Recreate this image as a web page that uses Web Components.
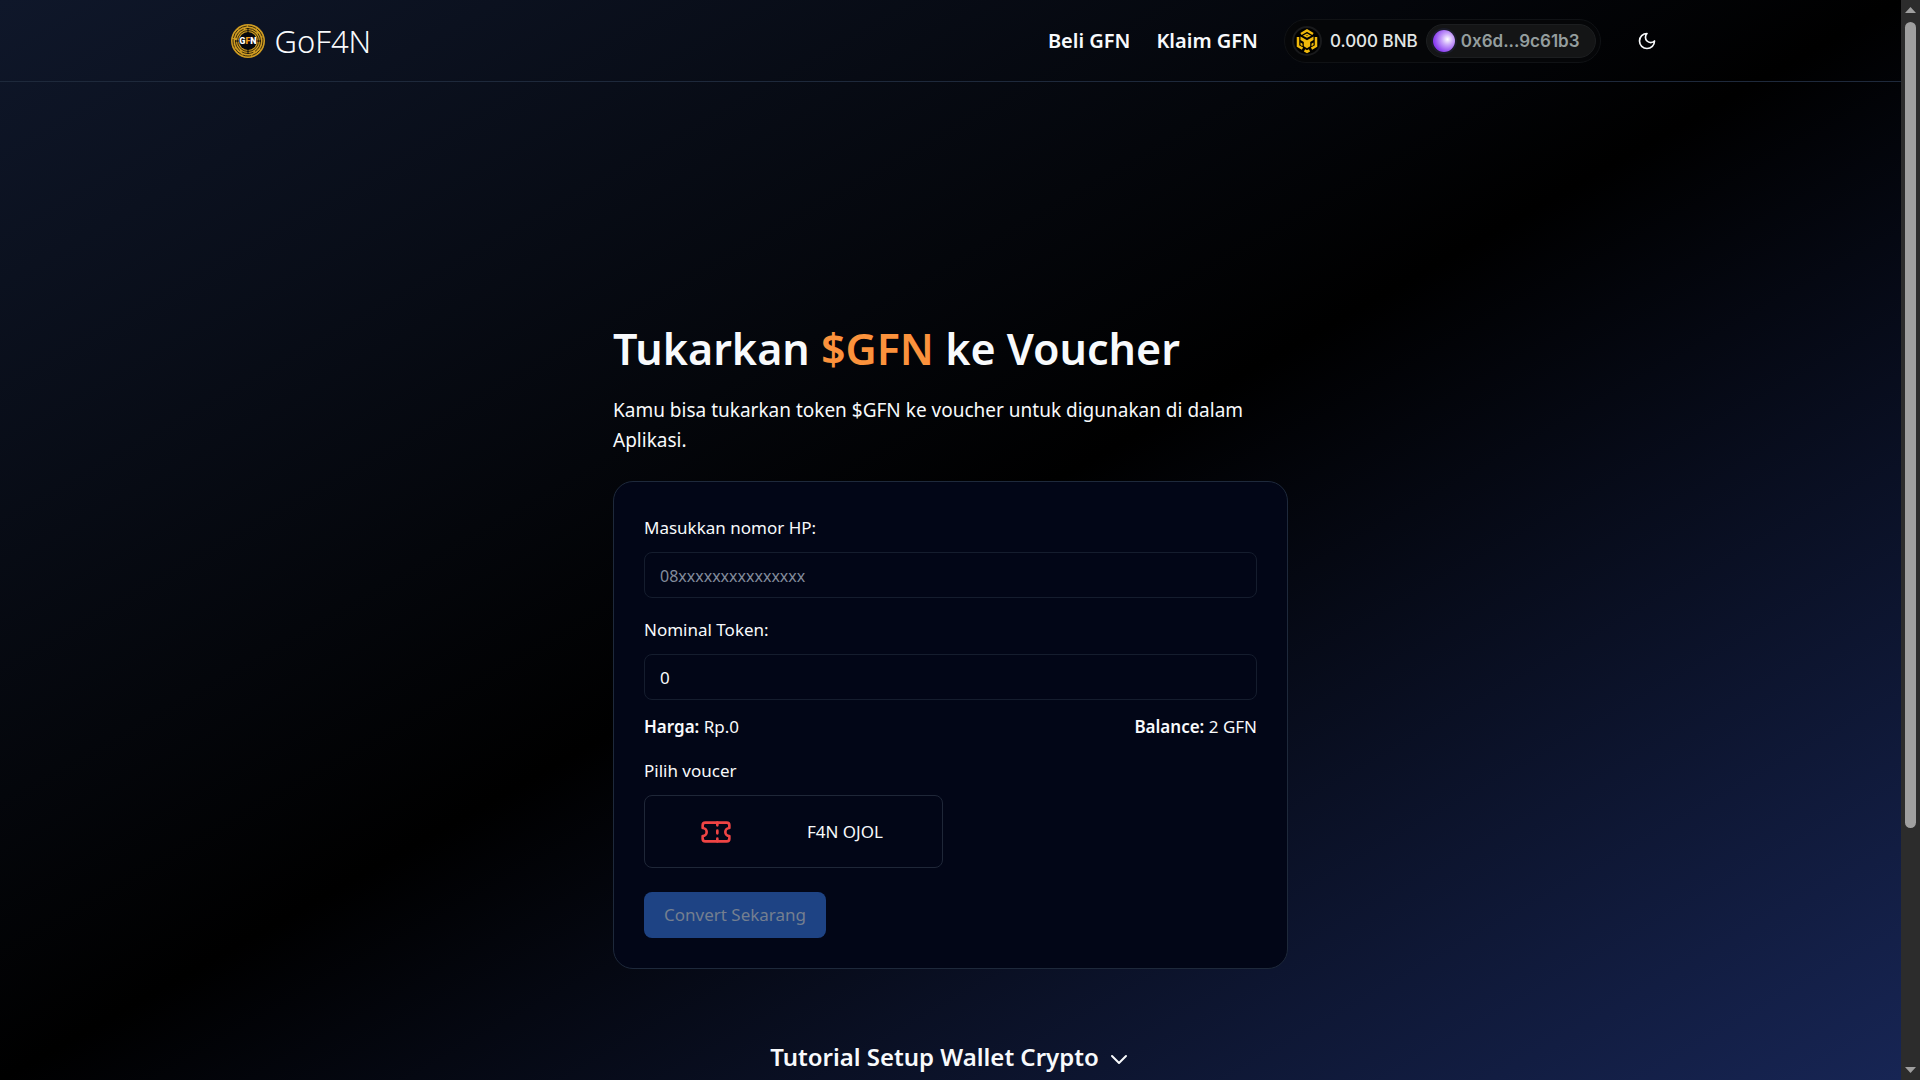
<!DOCTYPE html>
<html lang="id">
  <head>
    <meta charset="utf-8" />
    <title>GoF4N</title>
    <style>
      html,
      body {
        margin: 0;
        height: 100%;
        overflow: hidden;
      }

      body {
        font-family: "Noto Sans", sans-serif;
        font-size: 16px;
        line-height: 24px;
        color: #f8fafc;
        background: #000;
      }
    </style>
  </head>
  <body>
    <app-shell>
      <site-header slot="header">
        <nav-link href="#beli">Beli GFN</nav-link>
        <nav-link href="#klaim">Klaim GFN</nav-link>
        <wallet-pill slot="wallet" balance="0.000 BNB" address="0x6d...9c61b3"></wallet-pill>
      </site-header>
      <page-hero>
        Tukarkan <span slot="token">$GFN</span>
        <span slot="target">ke Voucher</span>
        <span slot="text">Kamu bisa tukarkan token $GFN ke voucher untuk digunakan di dalam Aplikasi.</span>
      </page-hero>
      <convert-card harga="Rp.0" balance="2 GFN">
        <text-field label="Masukkan nomor HP:" placeholder="08xxxxxxxxxxxxxxx"></text-field>
        <text-field label="Nominal Token:" value="0"></text-field>
        <voucher-option slot="voucher">F4N OJOL</voucher-option>
      </convert-card>
      <tutorial-toggle slot="footer">Tutorial Setup Wallet Crypto</tutorial-toggle>
    </app-shell>

    <script>
      class AppShell extends HTMLElement {
        constructor() {
          super();
          this.attachShadow({ mode: "open" });
          this.shadowRoot.innerHTML = `
            <style>
              :host {
                display: flex;
                height: 100vh;
              }

              .page {
                flex: 1;
                min-width: 0;
                overflow: hidden;
                background: linear-gradient(to bottom right, #0f172a, #000, #172554);
              }

              main {
                max-width: 675px;
                margin: 0 auto;
                padding-top: 237px;
              }

              footer {
                padding-top: 72px;
              }
            </style>
            <div class="page">
              <slot name="header"></slot>
              <main><slot></slot></main>
              <footer><slot name="footer"></slot></footer>
            </div>
            <scroll-rail></scroll-rail>
          `;
        }
      }

      class ScrollRail extends HTMLElement {
        constructor() {
          super();
          this.attachShadow({ mode: "open" });
          this.shadowRoot.innerHTML = `
            <style>
              :host {
                display: flex;
                flex-direction: column;
                align-items: center;
                width: 19px;
                background: #2c2c2c;
              }

              svg {
                display: block;
                fill: #9f9f9f;
              }

              .track {
                display: flex;
                flex-direction: column;
                flex: 1;
                width: 11px;
              }

              .thumb {
                flex: 7;
                border-radius: 6px;
                background: #9f9f9f;
              }

              .rest {
                flex: 2;
              }
            </style>
            <svg width="19" height="22" viewBox="0 0 19 22"><path d="M4 13l5.500-6 5.500 6z" /></svg>
            <div class="track">
              <div class="thumb"></div>
              <div class="rest"></div>
            </div>
            <svg width="19" height="22" viewBox="0 0 19 22"><path d="M4 9l5.500 6 5.500-6z" /></svg>
          `;
        }
      }

      class SiteHeader extends HTMLElement {
        constructor() {
          super();
          this.attachShadow({ mode: "open" });
          this.shadowRoot.innerHTML = `
            <style>
              :host {
                display: block;
                border-bottom: 1px solid #1e293b;
              }

              header {
                display: flex;
                align-items: center;
                max-width: 1440px;
                height: 81px;
                margin: 0 auto;
                box-sizing: border-box;
              }

              gfn-logo {
                margin-right: auto;
              }

              nav {
                display: flex;
                gap: 26px;
                margin-right: 26px;
              }

              button {
                display: flex;
                align-items: center;
                justify-content: center;
                width: 40px;
                height: 40px;
                margin: 0 4px 0 26px;
                padding: 0;
                border: 0;
                background: none;
                color: inherit;
              }
            </style>
            <header>
              <gfn-logo></gfn-logo>
              <nav><slot></slot></nav>
              <slot name="wallet"></slot>
              <button aria-label="Toggle theme">
                <svg width="20" height="20" viewBox="0 0 24 24" fill="none" stroke="currentColor" stroke-width="2" stroke-linecap="round" stroke-linejoin="round">
                  <path d="M12 3a6 6 0 0 0 9 9 9 9 0 1 1-9-9Z" />
                </svg>
              </button>
            </header>
          `;
        }
      }

      class GfnLogo extends HTMLElement {
        constructor() {
          super();
          this.attachShadow({ mode: "open" });
          this.shadowRoot.innerHTML = `
            <style>
              :host {
                display: block;
              }

              a {
                display: flex;
                align-items: center;
                gap: 10px;
                color: inherit;
                text-decoration: none;
                font-size: 31px;
                font-weight: 300;
                line-height: 36px;
              }
            </style>
            <a href="#">
              <svg width="34" height="34" viewBox="0 0 34 34" aria-hidden="true">
                <circle cx="17" cy="17" r="17" fill="#cf9c22" />
                <g fill="none" stroke="#3d2d0b">
                  <circle cx="17" cy="17" r="15" stroke-dasharray="9 1" />
                  <circle cx="17" cy="17" r="12.500" stroke-dasharray="12 2" />
                  <circle cx="17" cy="17" r="10.500" />
                </g>
                <circle cx="17" cy="17" r="9" fill="#07090f" />
                <path d="M17 4v8M17 22v8M4 17h5M25 17h5" stroke="#07090f" />
                <text x="17" y="20" text-anchor="middle" font-family="Roboto, sans-serif" font-size="9" font-weight="900" fill="#fff">G<tspan fill="#f59e1b">F</tspan>N</text>
              </svg>
              <span>GoF4N</span>
            </a>
          `;
        }
      }

      class NavLink extends HTMLElement {
        constructor() {
          super();
          this.attachShadow({ mode: "open" });
          this.shadowRoot.innerHTML = `
            <style>
              :host {
                display: block;
              }

              a {
                color: inherit;
                text-decoration: none;
                font-size: 20px;
                font-weight: 600;
                line-height: 28px;
              }
            </style>
            <a href="${this.getAttribute("href")}"><slot></slot></a>
          `;
        }
      }

      class WalletPill extends HTMLElement {
        constructor() {
          super();
          this.attachShadow({ mode: "open" });
          this.shadowRoot.innerHTML = `
            <style>
              :host {
                display: block;
              }

              button {
                display: flex;
                align-items: center;
                gap: 8px;
                height: 44px;
                box-sizing: border-box;
                padding: 0 4px 0 7px;
                border: 1px solid #101215;
                border-radius: 22px;
                background: #050608;
                color: #e4e7e7;
                font: 500 17px/20px Inter, sans-serif;
              }

              svg {
                display: block;
              }

              .address {
                display: flex;
                align-items: center;
                gap: 6px;
                height: 34px;
                box-sizing: border-box;
                padding: 0 15px 0 6px;
                border: 1px solid #1c1e20;
                border-radius: 17px;
                background: #141516;
                color: #949e9e;
                font-weight: 600;
              }

              .avatar {
                width: 22px;
                height: 22px;
                border-radius: 50%;
                box-shadow: 0 0 0 2px #1b1c2b;
                background: radial-gradient(circle at 66% 42%, #fff 0%, #c9a4fa 30%, #8b3ff0 70%, #7327e0 100%);
              }
            </style>
            <button>
              <svg width="30" height="30" viewBox="0 0 30 30" aria-hidden="true">
                <circle cx="15" cy="15" r="14" fill="#000" stroke="#191a1c" stroke-width="2" />
                <g fill="none" stroke="#f0b90b" stroke-width="2.500">
                  <path d="M9 8l6-3.500L21 8" />
                  <path d="M12.500 9.700L15 8.300l2.500 1.400L15 11z" stroke-width="1.500" />
                  <path d="M6 11v9l4.500 2.600M24 11v9l-4.500 2.600" />
                  <path d="M12.500 24.300L15 25.700l2.500-1.400" />
                </g>
                <path fill="#f0b90b" d="M8.500 10.500l6.500 3.800 6.500-3.800v3.500l-3.300 2v4.200L15 22.200l-3.200-2V16l-3.300-2z" />
                <path fill="#f0b90b" d="M8.500 16.500l2 1.200v2.600l-2-1.200zM21.500 16.500l-2 1.200v2.600l2-1.200z" />
              </svg>
              <span>${this.getAttribute("balance")}</span>
              <span class="address"><span class="avatar"></span>${this.getAttribute("address")}</span>
            </button>
          `;
        }
      }

      class PageHero extends HTMLElement {
        constructor() {
          super();
          this.attachShadow({ mode: "open" });
          this.shadowRoot.innerHTML = `
            <style>
              :host {
                display: block;
                margin-bottom: 26px;
              }

              h1 {
                margin: 0 0 16px;
                font-size: 43px;
                font-weight: 600;
                line-height: 60px;
              }

              .token {
                color: #fb923c;
              }

              p {
                margin: 0;
                font-size: 19px;
                line-height: 30px;
              }
            </style>
            <h1><slot></slot><span class="token"><slot name="token"></slot></span> <slot name="target"></slot></h1>
            <p><slot name="text"></slot></p>
          `;
        }
      }

      class ConvertCard extends HTMLElement {
        constructor() {
          super();
          this.attachShadow({ mode: "open" });
          this.shadowRoot.innerHTML = `
            <style>
              :host {
                display: block;
                padding: 34px 30px 30px;
                border: 1px solid #1e293b;
                border-radius: 20px;
                background: #020617;
                font-size: 17px;
              }

              .fields {
                display: grid;
                gap: 20px;
              }

              .info {
                display: flex;
                justify-content: space-between;
                margin: 15px 0 20px;
              }

              b {
                font-weight: 600;
              }

              .label {
                margin: 0 0 12px;
              }

              button {
                display: block;
                height: 46px;
                margin-top: 24px;
                padding: 0 20px;
                border: 0;
                border-radius: 8px;
                background: #1e4384;
                color: #747f90;
                font: inherit;
              }
            </style>
            <form>
              <div class="fields"><slot></slot></div>
              <div class="info">
                <span><b>Harga:</b> ${this.getAttribute("harga")}</span>
                <span><b>Balance:</b> ${this.getAttribute("balance")}</span>
              </div>
              <p class="label">Pilih voucer</p>
              <slot name="voucher"></slot>
              <button type="submit" disabled>Convert Sekarang</button>
            </form>
          `;
        }
      }

      class TextField extends HTMLElement {
        constructor() {
          super();
          this.attachShadow({ mode: "open" });
          this.shadowRoot.innerHTML = `
            <style>
              :host {
                display: block;
              }

              label {
                display: block;
                margin-bottom: 12px;
              }

              input {
                display: block;
                width: 100%;
                height: 46px;
                box-sizing: border-box;
                padding: 0 15px;
                border: 1px solid #151d2e;
                border-radius: 8px;
                background: none;
                color: inherit;
                font: inherit;
              }

              input::placeholder {
                color: #828c9c;
                font-size: 16px;
              }
            </style>
            <label for="field">${this.getAttribute("label")}</label>
            <input id="field" type="text" />
          `;

          this.inputElement = this.shadowRoot.querySelector("input");
          this.inputElement.placeholder = this.getAttribute("placeholder") || "";
          this.inputElement.value = this.getAttribute("value") || "";
        }
      }

      class VoucherOption extends HTMLElement {
        constructor() {
          super();
          this.attachShadow({ mode: "open" });
          this.shadowRoot.innerHTML = `
            <style>
              :host {
                display: block;
              }

              button {
                display: grid;
                grid-template-columns: 1fr 1fr;
                align-items: center;
                width: calc(50% - 8px);
                height: 73px;
                padding: 0 32px 0 6px;
                border: 1px solid #1f2738;
                border-radius: 8px;
                background: none;
                color: inherit;
                font: inherit;
              }

              svg {
                justify-self: center;
              }
            </style>
            <button type="button">
              <svg width="32" height="32" viewBox="0 0 24 24" fill="none" stroke="#ef4444" stroke-width="2" stroke-linecap="round" stroke-linejoin="round">
                <path d="M2 9a3 3 0 0 1 0 6v2a2 2 0 0 0 2 2h16a2 2 0 0 0 2-2v-2a3 3 0 0 1 0-6V7a2 2 0 0 0-2-2H4a2 2 0 0 0-2 2Z" />
                <path d="M13 5v2M13 17v2M13 11v2" />
              </svg>
              <span><slot></slot></span>
            </button>
          `;
        }
      }

      class TutorialToggle extends HTMLElement {
        constructor() {
          super();
          this.attachShadow({ mode: "open" });
          this.shadowRoot.innerHTML = `
            <style>
              :host {
                display: flex;
                justify-content: center;
              }

              button {
                display: flex;
                align-items: center;
                gap: 8px;
                padding: 0;
                border: 0;
                background: none;
                color: inherit;
                font: inherit;
                font-size: 24px;
                font-weight: 600;
                line-height: 32px;
              }
            </style>
            <button>
              <slot></slot>
              <svg width="24" height="24" viewBox="0 0 24 24" fill="none" stroke="currentColor" stroke-width="2" stroke-linecap="round" stroke-linejoin="round">
                <path d="m5 11 7 7 7-7" />
              </svg>
            </button>
          `;
        }
      }

      customElements.define("app-shell", AppShell);
      customElements.define("scroll-rail", ScrollRail);
      customElements.define("site-header", SiteHeader);
      customElements.define("gfn-logo", GfnLogo);
      customElements.define("nav-link", NavLink);
      customElements.define("wallet-pill", WalletPill);
      customElements.define("page-hero", PageHero);
      customElements.define("convert-card", ConvertCard);
      customElements.define("text-field", TextField);
      customElements.define("voucher-option", VoucherOption);
      customElements.define("tutorial-toggle", TutorialToggle);
    </script>
  </body>
</html>
